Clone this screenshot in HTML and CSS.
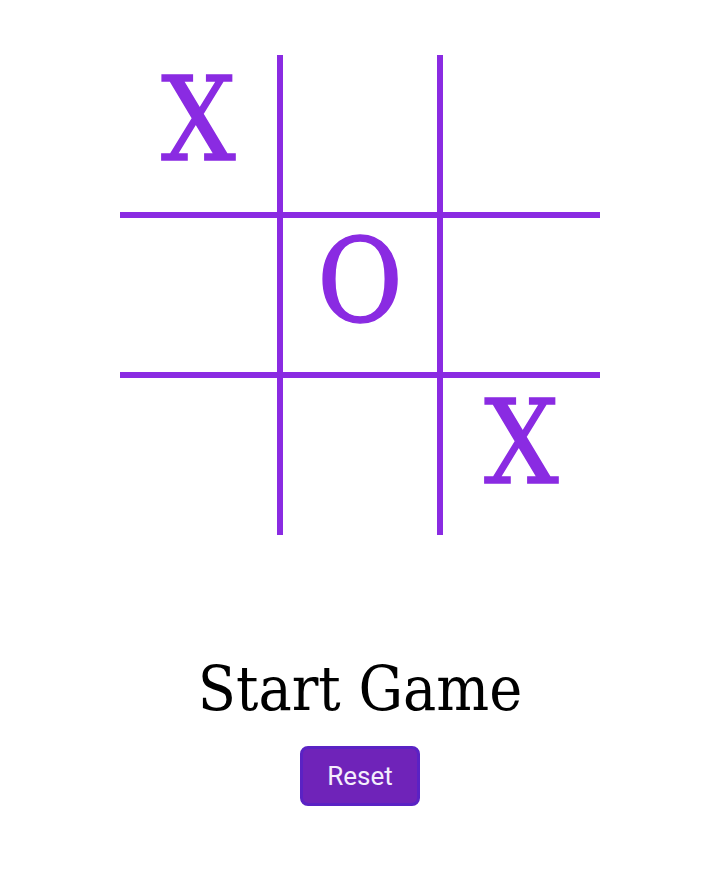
FILE: index.html
```html
<!DOCTYPE html>
<html lang="en">
<head>
<meta charset="utf-8">
<title>Tic Tac Toe</title>
<link rel="stylesheet" href="styles.css">
</head>
<body>
<main class="game">
  <div class="board">
    <div class="cell c-tl">X</div>
    <div class="cell c-tm"></div>
    <div class="cell c-tr"></div>
    <div class="cell c-ml"></div>
    <div class="cell c-mm">O</div>
    <div class="cell c-mr"></div>
    <div class="cell c-bl"></div>
    <div class="cell c-bm"></div>
    <div class="cell c-br">X</div>
  </div>
  <h1 class="status">Start Game</h1>
  <button class="reset">Reset</button>
</main>
</body>
</html>
```
FILE: styles.css
```css
html, body {
  margin: 0;
  padding: 0;
  background: #ffffff;
}
.game {
  display: flex;
  flex-direction: column;
  align-items: center;
  padding-top: 55px;
}
.board {
  display: grid;
  grid-template-columns: repeat(3, 160px);
  grid-template-rows: repeat(3, 160px);
}
.cell {
  box-sizing: border-box;
  display: flex;
  align-items: center;
  justify-content: center;
  padding-bottom: 28px;
  font-family: "DejaVu Serif", "Liberation Serif", serif;
  font-stretch: condensed;
  font-size: 116px;
  color: #8a2be2;
  -webkit-text-stroke: 1.5px #8a2be2;
  border: 0 solid #8a2be2;
  line-height: 1;
}
.c-tl { border-right-width: 3px; border-bottom-width: 3px; }
.c-tm { border-left-width: 3px; border-right-width: 3px; border-bottom-width: 3px; }
.c-tr { border-left-width: 3px; border-bottom-width: 3px; }
.c-ml { border-top-width: 3px; border-right-width: 3px; border-bottom-width: 3px; }
.c-mm { border-width: 3px; }
.c-mr { border-top-width: 3px; border-left-width: 3px; border-bottom-width: 3px; }
.c-bl { border-top-width: 3px; border-right-width: 3px; }
.c-bm { border-top-width: 3px; border-left-width: 3px; border-right-width: 3px; }
.c-br { border-top-width: 3px; border-left-width: 3px; }
.status {
  font-family: "DejaVu Serif", "Liberation Serif", serif;
  font-stretch: condensed;
  font-weight: 400;
  font-size: 62px;
  line-height: 1;
  color: #000000;
  margin: 123px 0 0;
}
.reset {
  box-sizing: border-box;
  margin-top: 26px;
  width: 120px;
  height: 60px;
  border: 3px solid #5a22c4;
  border-radius: 8px;
  background: #6f23b9;
  color: #f4eefc;
  font-family: Roboto, "Noto Sans", sans-serif;
  font-size: 26px;
  padding: 0;
}
```
